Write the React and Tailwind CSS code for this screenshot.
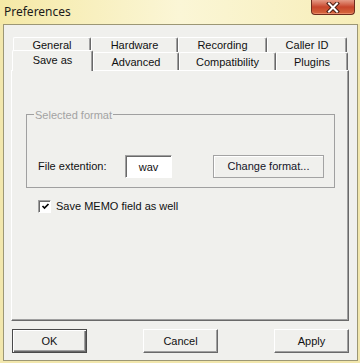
import React from "react";

const rowOne = [
  { label: "General", w: "w-[78px]" },
  { label: "Hardware", w: "w-[87px]" },
  { label: "Recording", w: "w-[89px]" },
  { label: "Caller ID", w: "w-[80px]" },
];

const rowTwo = [
  { label: "Save as", w: "w-[81px]", active: true },
  { label: "Advanced", w: "w-[86px]" },
  { label: "Compatibility", w: "w-[97px]" },
  { label: "Plugins", w: "w-[72px]" },
];

const tabBase =
  "flex items-center justify-center bg-[#f0f0ed] border-t border-l border-r border-t-white border-l-white border-r-[#696969] rounded-t-[2px] shadow-[inset_-1px_0_0_#a0a0a0]";

const raised =
  "border border-t-white border-l-white border-r-[#696969] border-b-[#696969] shadow-[inset_-1px_-1px_0_#a0a0a0] bg-[#f0f0ed]";

const CloseButton = () => (
  <div className="w-[44px] h-[15px] rounded-b-[4px] border border-t-0 border-[#6e2c1e] bg-gradient-to-b from-[#e49a86] via-[#c7452b] to-[#d6683f] flex items-center justify-center shadow-[inset_0_-1px_0_#e98a68]">
    <svg width="14" height="11" viewBox="0 0 14 11">
      <path d="M3 1.5 L11 9.5 M11 1.5 L3 9.5" stroke="#4a1e14" strokeWidth="4" strokeLinecap="square" />
      <path d="M3 1.5 L11 9.5 M11 1.5 L3 9.5" stroke="#ffffff" strokeWidth="2" strokeLinecap="square" />
    </svg>
  </div>
);

export default function App() {
  return (
    <div
      className="w-[360px] h-[363px] overflow-hidden bg-[#f2e7ad] text-[11px] text-[#111]"
      style={{ fontFamily: '"Liberation Sans", Arial, sans-serif' }}
    >
      {/* Title bar */}
      <div className="h-[24px] flex items-start bg-gradient-to-r from-[#f5e9a6] via-[#fbf6d6] to-[#f7eeb9]">
        <span
          className="mt-[3px] ml-[4px] text-[12px] text-[#1b1b1b]"
          style={{ fontFamily: '"Noto Sans", "Open Sans", sans-serif' }}
        >
          Preferences
        </span>
        <div className="ml-auto mr-[5px]">
          <CloseButton />
        </div>
      </div>

      {/* Client area */}
      <div className="ml-[3px] w-[355px] h-[337px] border border-[#9c9775] bg-[#f0f0ed] pt-[12px]">
        {/* Back tab row */}
        <div className="ml-[9px] flex h-[15px]">
          {rowOne.map((t) => (
            <div key={t.label} className={`${tabBase} ${t.w} h-[15px] pt-[1px]`}>
              {t.label}
            </div>
          ))}
        </div>

        {/* Front tab row */}
        <div className="ml-[8px] flex items-start h-[19px] -mb-[1px] relative z-10">
          {rowTwo.map((t) =>
            t.active ? (
              <div key={t.label} className={`${tabBase} ${t.w} h-[21px] -mt-[2px] pb-[1px]`}>
                {t.label}
              </div>
            ) : (
              <div key={t.label} className={`${tabBase} ${t.w} h-[18px] pt-[1px]`}>
                {t.label}
              </div>
            )
          )}
        </div>

        {/* Tab panel */}
        <div className="ml-[7px] w-[338px] h-[251px] border border-t-white border-l-white border-r-[#696969] border-b-[#696969] shadow-[inset_-1px_-1px_0_#a0a0a0]">
          <div className="ml-[14px] mt-[43px] w-[309px] h-[74px] border border-[#a0a0a0] relative">
            <span className="absolute -top-[8px] left-[7px] px-[1px] bg-[#f0f0ed] text-[#a3a3a3]">
              Selected format
            </span>
            <div className="flex items-center mt-[40px] ml-[11px]">
              <span className="w-[87px]">File extention:</span>
              <div className="w-[47px] h-[23px] bg-white border border-t-[#a0a0a0] border-l-[#a0a0a0] border-r-white border-b-white shadow-[inset_1px_1px_0_#696969] flex justify-center pt-[3px]">
                wav
              </div>
              <div className="ml-[41px] w-[111px] h-[23px] border border-[#a3a3a3] shadow-[inset_1px_1px_0_#fff] flex items-center justify-center text-[#141428]">
                Change format...
              </div>
            </div>
          </div>

          <div className="flex items-center mt-[10px] ml-[26px]">
            <div className="w-[13px] h-[13px] bg-white border border-t-[#a0a0a0] border-l-[#a0a0a0] border-r-white border-b-white shadow-[inset_1px_1px_0_#696969] flex items-center justify-center">
              <svg width="9" height="9" viewBox="0 0 9 9" className="ml-[1px] mt-[1px]">
                <path d="M1.5 4 L3.5 6 L7.5 2" stroke="#000" strokeWidth="1.7" fill="none" />
              </svg>
            </div>
            <span className="ml-[5px]">Save MEMO field as well</span>
          </div>
        </div>

        {/* Dialog buttons */}
        <div className="flex mt-[8px] ml-[8px]">
          <div className="w-[75px] h-[24px] border border-[#4a4a4a] shadow-[inset_1px_1px_0_#fff,inset_-1px_-1px_0_#696969,inset_-2px_-2px_0_#a0a0a0] bg-[#f0f0ed] flex items-center justify-center">
            OK
          </div>
          <div className={`ml-[56px] w-[75px] h-[24px] ${raised} flex items-center justify-center`}>
            Cancel
          </div>
          <div className={`ml-[56px] w-[75px] h-[24px] ${raised} flex items-center justify-center`}>
            Apply
          </div>
        </div>
      </div>
    </div>
  );
}
